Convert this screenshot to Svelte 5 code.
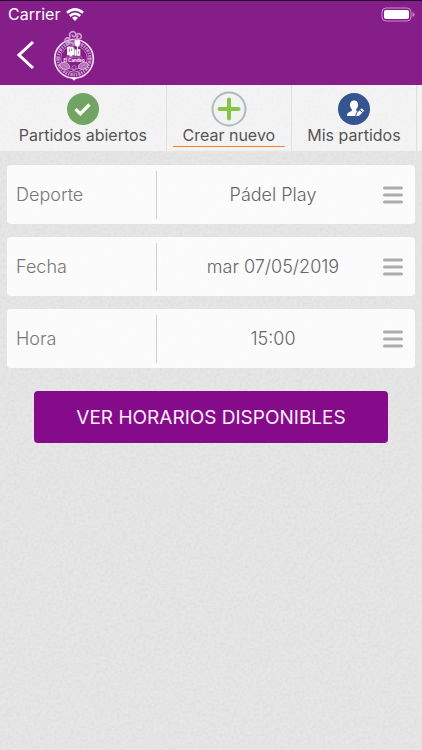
<script lang="ts">
	let tabs = [
		{ id: 'open', label: 'Partidos abiertos' },
		{ id: 'new', label: 'Crear nuevo' },
		{ id: 'mine', label: 'Mis partidos' }
	];
	let active = 'new';

	let fields = [
		{ id: 'deporte', label: 'Deporte', options: ['Pádel Play'] },
		{ id: 'fecha', label: 'Fecha', options: ['mar 07/05/2019'] },
		{ id: 'hora', label: 'Hora', options: ['15:00'] }
	];
</script>

<div class="page">
	<!-- paper grain -->
	<svg class="grain" aria-hidden="true">
		<filter id="grain">
			<feTurbulence type="fractalNoise" baseFrequency="0.35" numOctaves="2" />
			<feColorMatrix values="0 0 0 0 0.4  0 0 0 0 0.4  0 0 0 0 0.4  0.8 0 0 0 -0.3" />
		</filter>
		<rect width="100%" height="100%" filter="url(#grain)" />
	</svg>

	<header>
		<div class="status">
			<span>Carrier</span>
			<svg class="wifi" viewBox="0 0 18 13" aria-hidden="true">
				<path d="M1 4.800Q9 -2 17 4.800" />
				<path d="M3.800 7.900Q9 3.600 14.200 7.900" />
				<path class="dot" d="M6 9.800Q9 7.400 12 9.800L9 13Z" />
			</svg>
			<svg class="battery" viewBox="0 0 34 15" aria-hidden="true">
				<rect class="shell" x="1" y="1" width="29" height="13" rx="4" />
				<rect class="charge" x="3" y="3" width="25" height="9" rx="2" />
				<path class="tip" d="M31.5 5Q33.5 6 33.5 7.5T31.5 10Z" />
			</svg>
		</div>
		<div class="bar">
			<button class="back" aria-label="Volver">
				<svg viewBox="0 0 18 30" aria-hidden="true"><path d="M16 2L2 15l14 13" /></svg>
			</button>
			<svg class="logo" viewBox="24 16 126 152" role="img" aria-label="Club">
				<circle class="rim" cx="87" cy="102" r="58" />
				<circle class="letters" cx="87" cy="102" r="48" />
				<circle class="inner" cx="87" cy="102" r="40" />
				<path class="curls" d="M66 56c-14-10 1-23 8-14 7 8-8 13-9 4M76 38c-9-16 12-24 16-11 3 11-12 11-10 2M93 31c11-13 23 6 11 11-10 3-11-9-3-8M70 59c4-9 18-5 15 3M85 46c9-6 16 2 11 8M65 50c5 0 8 5 5 10" />
				<path class="solid" d="M66 66h18l4 5v20h-6v4h-8v-4h-8zM89 74h6v19h-6zM89 46h16l-1 15-5 4v8h7v20h-10V66l-6-5z" />
				<path class="holes" d="M73 71v10M80 71v8M101 79v8" />
				<path class="inner" d="M62 97h51M34 102h14M126 102h14M65 122l12 12M109 122l-12 12" />
				<text x="87" y="111">El Candeo</text>
				<ellipse class="racket" cx="59" cy="123" rx="15" ry="10" transform="rotate(18 59 123)" />
				<ellipse class="racket" cx="115" cy="123" rx="15" ry="10" transform="rotate(-18 115 123)" />
				<path class="inner" d="M72 128l30 16M102 128l-30 16M53 118l12 9M121 118l-12 9" />
				<circle class="inner" cx="87" cy="128" r="6" />
				<path class="solid" d="M78 159h18l-9 9z" />
			</svg>
		</div>
	</header>

	<nav>
		{#each tabs as tab}
			<button class="tab" class:active={active === tab.id} on:click={() => (active = tab.id)}>
				{#if tab.id === 'open'}
					<svg viewBox="0 0 36 36" aria-hidden="true">
						<circle cx="18" cy="18" r="16" fill="#72a463" />
						<path d="M10.5 18.2l4.800 4.500 9.200-9.200" fill="none" stroke="#fff" stroke-width="3.200" />
					</svg>
				{:else if tab.id === 'new'}
					<svg viewBox="0 0 36 36" aria-hidden="true">
						<circle cx="18" cy="18" r="16.5" fill="#f1f3f3" stroke="#adbac3" stroke-width="2" />
						<path d="M18 8.500v19M8.500 18h19" stroke="#85c446" stroke-width="4" stroke-linecap="round" />
					</svg>
				{:else}
					<svg viewBox="0 0 36 36" aria-hidden="true">
						<circle cx="18" cy="18" r="16" fill="#34558f" />
						<path d="M18 9.500c3 0 4.300 2.200 4 5-.2 2-1 3-1.800 3.700v1.800l2.500 1-3 4H11c0-3 1-3.600 4.800-5v-1.800C14.500 17 14 15.500 14 14c0-3 1.500-4.500 4-4.500z" fill="#fff" />
						<path d="M19.500 26l1-4 5.200-5.200 3 3-5.200 5.200z" fill="#fff" stroke="#34558f" />
						<path d="M23.800 18.700l3 3" stroke="#34558f" />
					</svg>
				{/if}
				<span>{tab.label}</span>
			</button>
		{/each}
	</nav>

	<form on:submit|preventDefault>
		{#each fields as field}
			<div class="field">
				<label for={field.id}>{field.label}</label>
				<select id={field.id}>
					{#each field.options as option}
						<option>{option}</option>
					{/each}
				</select>
				<svg class="lines" viewBox="0 0 20 18" aria-hidden="true">
					<path d="M1.500 2h17M1.500 9h17M1.500 16h17" />
				</svg>
			</div>
		{/each}
		<button class="submit" type="submit">VER HORARIOS DISPONIBLES</button>
	</form>
</div>

<style>
	:global(body) {
		margin: 0;
	}

	.page {
		position: relative;
		min-height: 100vh;
		background: #e6e6e6;
		font-family: Inter, 'Liberation Sans', sans-serif;
		isolation: isolate;
	}

	.grain {
		position: absolute;
		inset: 0;
		z-index: -1;
		width: 100%;
		height: 100%;
		opacity: 0.3;
	}

	button,
	select {
		margin: 0;
		padding: 0;
		border: 0;
		background: none;
		font-family: inherit;
		cursor: pointer;
	}

	header {
		box-sizing: border-box;
		height: 85px;
		border-top: 1px solid #22052b;
		background: #861e8a;
		color: #fff;
	}

	.status {
		display: flex;
		align-items: center;
		height: 26px;
		padding: 0 7px 0 8px;
		font-size: 16px;
	}

	.wifi {
		width: 18px;
		height: 13px;
		margin-left: 6px;
		fill: none;
		stroke: #fff;
		stroke-width: 2.6;
	}

	.wifi .dot {
		fill: #fff;
		stroke: none;
	}

	.battery {
		width: 34px;
		height: 15px;
		margin-left: auto;
	}

	.shell {
		fill: none;
		stroke: #c78fca;
	}

	.charge {
		fill: #fff;
	}

	.tip {
		fill: #c78fca;
	}

	.bar {
		display: flex;
		align-items: center;
		gap: 18px;
		height: 56px;
		padding-left: 17px;
	}

	.back svg {
		display: block;
		width: 18px;
		height: 30px;
		fill: none;
		stroke: #fff;
		stroke-width: 3;
	}

	.logo {
		width: 42px;
		height: 51px;
		fill: none;
		stroke: #f0dcf2;
	}

	.rim {
		stroke-width: 5;
	}

	.letters {
		stroke: #c48ac8;
		stroke-width: 10;
		stroke-dasharray: 5 2 7 3 4 3;
	}

	.inner {
		stroke: #cf9bd2;
		stroke-width: 2;
	}

	.curls {
		stroke: #cf9bd2;
		stroke-width: 5;
	}

	.solid {
		fill: #fff;
		stroke: none;
	}

	.holes {
		stroke: #861e8a;
		stroke-width: 2;
	}

	.racket {
		fill: #b56fba;
		stroke-width: 2;
	}

	.logo text {
		fill: #fff;
		stroke: none;
		font-size: 13px;
		font-weight: 700;
		text-anchor: middle;
	}

	nav {
		display: grid;
		grid-template-columns: 4fr 3fr 3fr;
		height: 66px;
		padding-right: 5px;
		background: rgba(255, 255, 255, 0.55);
	}

	.tab {
		display: flex;
		flex-direction: column;
		align-items: center;
		justify-content: flex-start;
		padding: 6px 6px 3px;
		border-right: 1px solid #dfdfdf;
		color: #555;
		font-size: 16px;
		line-height: 16px;
	}

	.tab svg {
		width: 36px;
		height: 36px;
	}

	.tab span {
		align-self: stretch;
		padding-bottom: 3px;
		border-bottom: 1px solid transparent;
		white-space: nowrap;
	}

	.tab.active span {
		border-color: #f08226;
	}

	form {
		display: flex;
		flex-direction: column;
		gap: 13px;
		padding: 14px 7px;
	}

	.field {
		display: flex;
		align-items: center;
		height: 59px;
		padding-right: 12px;
		border-radius: 4px;
		background: rgba(255, 255, 255, 0.85);
		font-size: 18px;
		font-weight: 300;
	}

	label {
		box-sizing: border-box;
		width: 150px;
		padding-left: 9px;
		border-right: 1px solid #cfcfcf;
		color: #777;
		line-height: 48px;
	}

	select {
		flex: 1;
		padding-left: 6px;
		appearance: none;
		color: #666;
		font-size: 18px;
		font-weight: 300;
		line-height: 24px;
		text-align: center;
		text-align-last: center;
	}

	.lines {
		width: 20px;
		height: 18px;
		stroke: #acacac;
		stroke-width: 3;
		stroke-linecap: round;
	}

	.submit {
		height: 52px;
		margin: 10px 27px;
		border-radius: 4px;
		background: #860b8b;
		color: #fbeefb;
		font-size: 19px;
	}
</style>
